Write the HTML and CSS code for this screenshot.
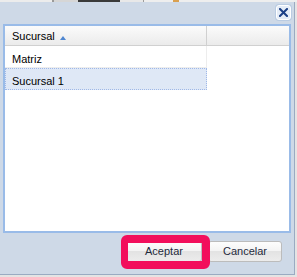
FILE: index.html
```html
<!DOCTYPE html>
<html>
<head>
<meta charset="utf-8">
<link rel="stylesheet" href="styles.css">
</head>
<body>
<div class="strip">
  <span class="seg s1"></span><span class="seg s2"></span><span class="seg s3"></span><span class="seg s4"></span><span class="seg s5"></span><span class="seg s6"></span><span class="seg s7"></span><span class="seg s8"></span><span class="seg s9"></span>
</div>
<div class="window">
  <div class="titlebar">
    <button class="close" aria-label="Cerrar">
      <svg width="9" height="9" viewBox="0 0 9 9"><path d="M1 1 L8 8 M8 1 L1 8" stroke="#1b3f86" stroke-width="2" stroke-linecap="square" fill="none"/></svg>
    </button>
  </div>
  <div class="panel">
    <div class="grid-header">
      <div class="hcell col1">Sucursal<span class="sort"></span></div>
      <div class="hcell rest"></div>
    </div>
    <div class="rows">
      <div class="row"><div class="cell">Matriz</div></div>
      <div class="row selected"><div class="cell">Sucursal 1</div></div>
    </div>
  </div>
  <div class="footer">
    <div class="btnwrap">
      <button class="btn accept">Aceptar</button>
      <span class="highlight"></span>
    </div>
    <button class="btn cancel">Cancelar</button>
  </div>
</div>
</body>
</html>
```
FILE: styles.css
```css
html, body {
  margin: 0;
  padding: 0;
}
body {
  width: 297px;
  height: 277px;
  background: #e4e4e4;
  font-family: "Liberation Sans", Arial, sans-serif;
  font-size: 11px;
  overflow: hidden;
}
.strip {
  display: flex;
  height: 2px;
  background: #eeeeee;
}
.seg { display: block; height: 2px; }
.s1 { width: 52px; background: #ececec; }
.s2 { width: 2px; background: #9a9a9a; }
.s3 { width: 24px; background: #d6d6d6; }
.s4 { width: 42px; background: #3a3a3a; }
.s5 { width: 23px; background: #e8e8e8; }
.s6 { width: 1px; background: #9c9c9c; }
.s7 { width: 29px; background: #eeeeee; }
.s8 { width: 6px; background: #d9a050; }
.s9 { width: 50px; background: #eeeeee; }
.window {
  width: 294px;
  height: 272px;
  background: #ced9e7;
  border-right: 1px solid #9aabc2;
  border-bottom: 1px solid #9aabc2;
  display: flex;
  flex-direction: column;
}
.titlebar {
  height: 22px;
  display: flex;
  justify-content: flex-end;
  align-items: flex-start;
  padding: 3px 3px 0 0;
  box-sizing: border-box;
}
.close {
  width: 15px;
  height: 15px;
  padding: 0;
  margin: 0;
  border: 1px solid #ffffff;
  border-radius: 3px;
  background: #e4ecf7;
  box-shadow: 0 0 0 1px #b9cbe2;
  display: flex;
  align-items: center;
  justify-content: center;
  box-sizing: border-box;
}
.close svg { display: block; }
.panel {
  margin-left: 3px;
  width: 288px;
  height: 209px;
  box-sizing: border-box;
  border: 2px solid #99bbe8;
  background: #ffffff;
}
.grid-header {
  display: flex;
  height: 20px;
  box-sizing: border-box;
  border-bottom: 1px solid #d0d0d0;
  background: linear-gradient(#fbfbfb, #ebebeb);
}
.hcell {
  box-sizing: border-box;
  padding: 4px 0 0 7px;
  line-height: 13px;
  color: #000;
}
.col1 {
  width: 202px;
  border-right: 1px solid #d0d0d0;
  display: flex;
  align-items: flex-start;
}
.rest { flex: 1; }
.sort {
  width: 0;
  height: 0;
  margin: 6px 0 0 5px;
  border-left: 3px solid transparent;
  border-right: 3px solid transparent;
  border-bottom: 4px solid #4f86d0;
}
.rows { display: flex; flex-direction: column; }
.row {
  width: 202px;
  height: 22px;
  box-sizing: border-box;
  border-bottom: 1px solid #ededed;
  border-right: 1px solid #ededed;
}
.row.selected {
  background: #dfe8f6;
  border: 1px dotted #9fb8e8;
}
.cell {
  padding: 7px 0 0 7px;
  line-height: 13px;
  color: #000;
}
.row.selected .cell { padding: 6px 0 0 6px; }
.footer {
  display: flex;
  justify-content: flex-end;
  align-items: flex-start;
  gap: 6px;
  padding: 8px 12px 0 0;
}
.btnwrap { position: relative; display: flex; }
.btn {
  height: 21px;
  margin: 0;
  padding: 0;
  box-sizing: border-box;
  border: 1px solid #bcbcbc;
  border-radius: 3px;
  background: linear-gradient(#fdfdfd 0%, #f3f3f3 50%, #e3e3e3 50%, #ececec 100%);
  font-family: "Liberation Sans", Arial, sans-serif;
  font-size: 11px;
  color: #1f2a3c;
  line-height: 19px;
  text-align: center;
}
.accept { width: 76px; }
.cancel { width: 74px; }
.highlight {
  position: absolute;
  left: -5px;
  top: -6px;
  right: -8px;
  bottom: -7px;
  border-style: solid;
  border-color: #f20f5c;
  border-width: 8px 8px 8px 7px;
  border-radius: 6px;
  pointer-events: none;
}
```
